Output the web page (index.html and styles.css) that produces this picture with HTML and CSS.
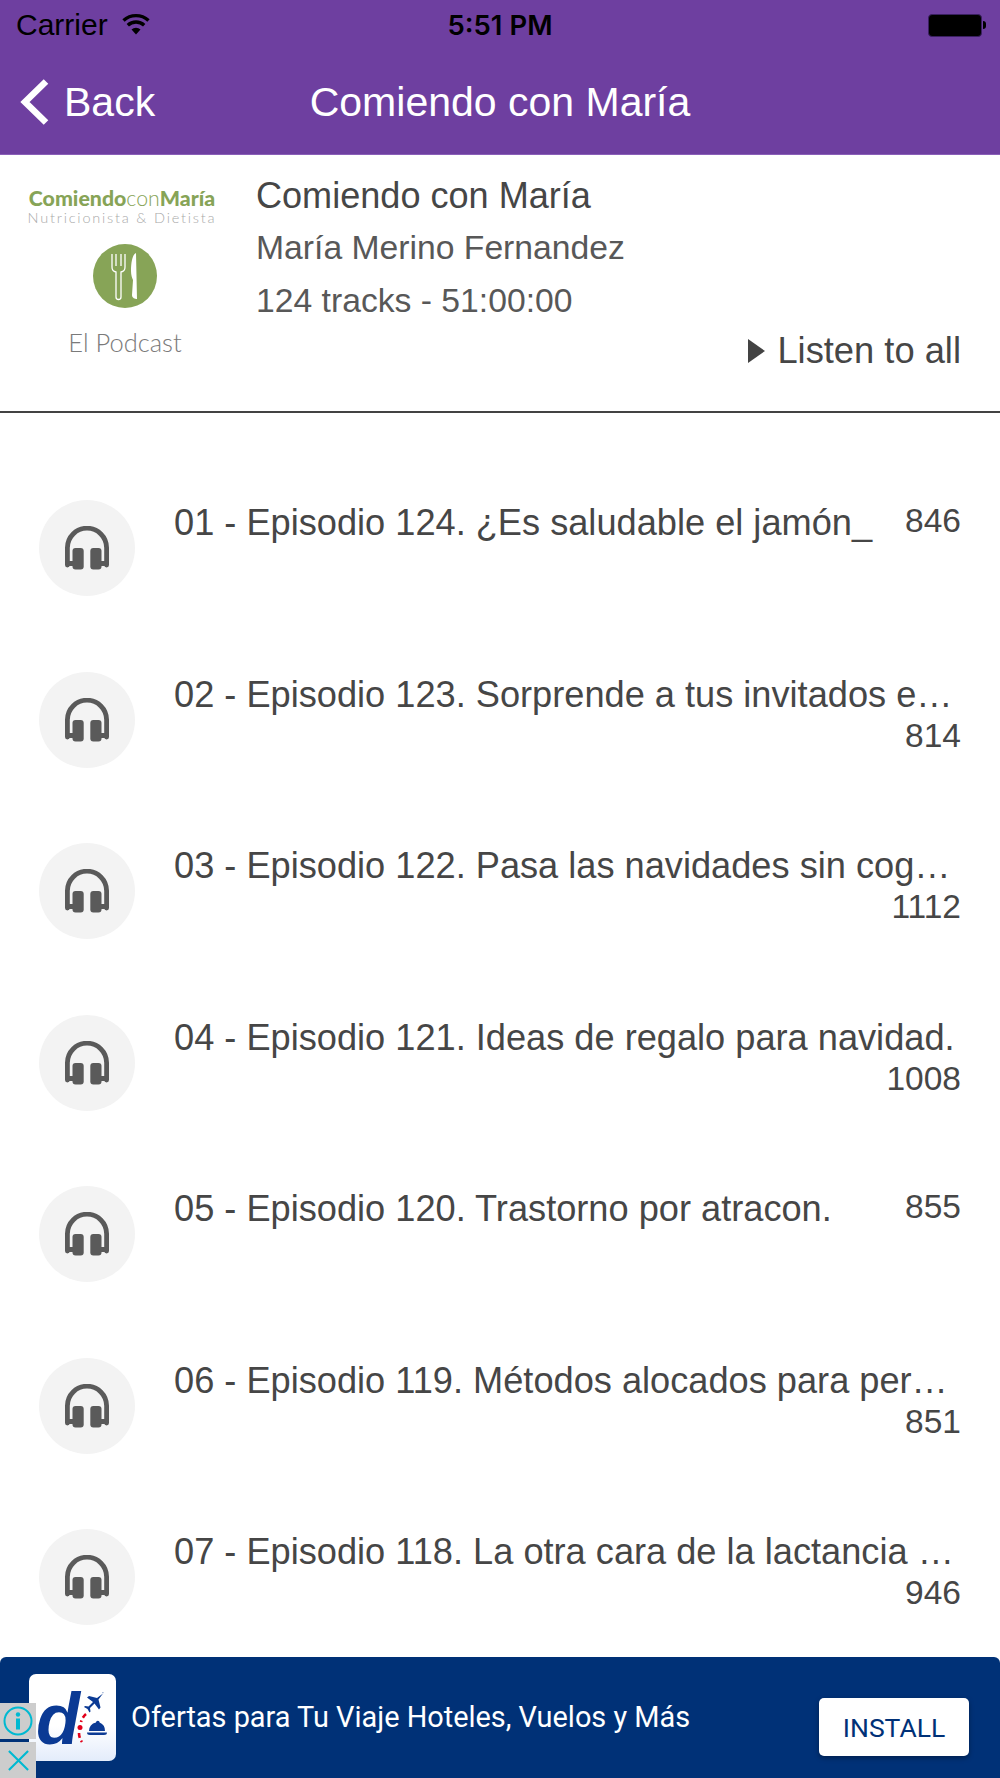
FILE: index.html
```html
<!DOCTYPE html>
<html lang="es">
<head>
<meta charset="utf-8">
<title>Comiendo con María</title>
<link rel="stylesheet" href="styles.css">
</head>
<body>
<svg class="defs" width="0" height="0" aria-hidden="true">
  <symbol id="phones" viewBox="0 0 44 44">
    <path d="M2.400 39V21.800a19.600 19.600 0 0 1 39.200 0V39" fill="none" stroke="#5a5a5a" stroke-width="4.800" stroke-linecap="round"/>
    <rect x="7.500" y="22" width="11.200" height="21.500" rx="3" fill="#5a5a5a"/>
    <rect x="25.300" y="22" width="11.200" height="21.500" rx="3" fill="#5a5a5a"/>
    <path d="M2 35h6v5H4zM42 35h-6v5h4z" fill="#5a5a5a"/>
  </symbol>
</svg>
<div class="app">
  <header class="top">
    <div class="status">
      <div class="status-left">
        <span class="carrier">Carrier</span>
        <svg class="wifi" viewBox="0 0 30 22"><path d="M15 21.500 10.500 16.500a6.500 6.500 0 0 1 9 0z" fill="#000"/><path d="M6.800 12.300a12 12 0 0 1 16.400 0M2.500 7.500a18.500 18.500 0 0 1 25 0" fill="none" stroke="#000" stroke-width="3.400"/></svg>
      </div>
      <span class="clock">5:51 PM</span>
      <div class="battery"><div class="battery-body"></div><div class="battery-tip"></div></div>
    </div>
    <nav class="nav">
      <div class="back">
        <svg class="chevron" viewBox="0 0 30 48"><path d="M26 3.500 5 24l21 20.500" fill="none" stroke="#fff" stroke-width="6.500"/></svg>
        <span>Back</span>
      </div>
      <h1 class="nav-title">Comiendo con María</h1>
    </nav>
  </header>

  <section class="info">
    <div class="logo">
      <div class="logo-brand"><b>Comiendo</b><span class="logo-thin">con</span><b>María</b></div>
      <div class="logo-sub">Nutricionista &amp; Dietista</div>
      <svg class="logo-mark" viewBox="0 0 64 64">
        <circle cx="32" cy="32" r="32" fill="#87a457"/>
        <path d="M19 10v13a5 5 0 0 0 4 5v25a2.500 2.500 0 0 0 5 0V28a5 5 0 0 0 4-5V10M23 10v12M28 10v12" fill="none" stroke="#fff" stroke-width="1.300"/>
        <path d="M43 9c-3 1-5 8-5 18 0 4 1 7 2 9l-1 15c0 3 3 4 5 4z" fill="#fff"/>
      </svg>
      <div class="logo-podcast">El Podcast</div>
    </div>
    <div class="meta">
      <div class="meta-title">Comiendo con María</div>
      <div class="meta-line">María Merino Fernandez</div>
      <div class="meta-line">124 tracks - 51:00:00</div>
      <div class="listen"><span class="tri"></span><span>Listen to all</span></div>
    </div>
  </section>

  <main class="list">
    <div class="row">
      <div class="disc"><svg class="phones"><use href="#phones"/></svg></div>
      <div class="row-body"><span class="row-title">01 - Episodio 124. ¿Es saludable el jamón_</span><span class="count">846</span></div>
    </div>
    <div class="row">
      <div class="disc"><svg class="phones"><use href="#phones"/></svg></div>
      <div class="row-body wrap"><span class="row-title">02 - Episodio 123. Sorprende a tus invitados e…</span><span class="count">814</span></div>
    </div>
    <div class="row">
      <div class="disc"><svg class="phones"><use href="#phones"/></svg></div>
      <div class="row-body wrap"><span class="row-title">03 - Episodio 122. Pasa las navidades sin cog…</span><span class="count">1112</span></div>
    </div>
    <div class="row">
      <div class="disc"><svg class="phones"><use href="#phones"/></svg></div>
      <div class="row-body wrap"><span class="row-title">04 - Episodio 121. Ideas de regalo para navidad.</span><span class="count">1008</span></div>
    </div>
    <div class="row">
      <div class="disc"><svg class="phones"><use href="#phones"/></svg></div>
      <div class="row-body"><span class="row-title">05 - Episodio 120. Trastorno por atracon.</span><span class="count">855</span></div>
    </div>
    <div class="row">
      <div class="disc"><svg class="phones"><use href="#phones"/></svg></div>
      <div class="row-body wrap"><span class="row-title">06 - Episodio 119. Métodos alocados para per…</span><span class="count">851</span></div>
    </div>
    <div class="row">
      <div class="disc"><svg class="phones"><use href="#phones"/></svg></div>
      <div class="row-body wrap"><span class="row-title">07 - Episodio 118. La otra cara de la lactancia …</span><span class="count">946</span></div>
    </div>
  </main>

  <footer class="ad">
    <div class="ad-icon">
      <span class="ad-d">d</span>
      <svg class="ad-art" viewBox="0 0 87 87">
        <path d="M74 19.500 68 24 60 22l-2 1.500 6 4.500-4.500 4.500-3.500-.5-1 1 3.500 2 2 3.500 1-1-.5-3.500 4.500-4.500 4.500 6 1.500-2-2-8 4.500-6q1-2-.5-1.500z" fill="#0b3a94"/>
        <path d="M57 40q-3.500 3-5 8M50 59q0 5 3 9" fill="none" stroke="#e2001a" stroke-width="2.600" stroke-dasharray="5 3"/>
        <circle cx="51" cy="53.500" r="2.500" fill="#e2001a"/>
        <path d="M60 57a9 9 0 0 1 7-8.500 1.800 1.800 0 1 1 3.600 0A9 9 0 0 1 76 57zM58 58.500h20q0 2.500-3 2.500H61q-3 0-3-2.500z" fill="#0b3a94"/>
      </svg>
    </div>
    <div class="ad-text">Ofertas para Tu Viaje Hoteles, Vuelos y Más</div>
    <div class="ad-btn">INSTALL</div>
    <div class="ad-controls">
      <div class="ad-ctl"><svg viewBox="0 0 30 30"><circle cx="15" cy="15" r="13.500" fill="none" stroke="#00b9d1" stroke-width="2"/><circle cx="15" cy="8.500" r="2.200" fill="#00b9d1"/><rect x="13" y="12.500" width="4" height="11" fill="#00b9d1"/></svg></div>
      <div class="ad-ctl ad-close"><svg viewBox="0 0 24 24"><path d="M2 2 22 22M22 2 2 22" fill="none" stroke="#00b9d1" stroke-width="2.200"/></svg></div>
    </div>
  </footer>
</div>
</body>
</html>
```

FILE: styles.css
```css
* { box-sizing: border-box; }
html, body { margin: 0; padding: 0; background: #fff; }
.defs { position: absolute; }
.app {
  width: 1000px;
  height: 1778px;
  display: flex;
  flex-direction: column;
  overflow: hidden;
  font-family: "Liberation Sans", Arial, sans-serif;
  color: #464646;
}

/* header */
.top { background: #6e3fa0; height: 155px; border-bottom: 1px solid #8a5fb8; flex: none; }
.status {
  height: 50px;
  padding: 0 14px 0 16px;
  display: flex;
  align-items: center;
  justify-content: space-between;
  color: #000;
  position: relative;
}
.status-left { display: flex; align-items: center; gap: 13px; }
.carrier { font-size: 30px; }
.wifi { width: 30px; height: 22px; margin-top: -3px; }
.clock {
  position: absolute;
  left: 0;
  right: 0;
  text-align: center;
  font-family: Inter, "Liberation Sans", sans-serif;
  font-weight: 600;
  font-size: 27.500px;
}
.battery { display: flex; align-items: center; }
.battery-body {
  width: 54px;
  height: 23px;
  background: #000;
  border: 1px solid #3a2060;
  border-radius: 4px;
}
.battery-tip { width: 3px; height: 8px; background: #000; border-radius: 0 3px 3px 0; margin-left: 1px; }
.nav {
  height: 104px;
  display: flex;
  align-items: center;
  position: relative;
  color: #fff;
  padding-left: 20px;
}
.back { display: flex; align-items: center; gap: 14px; font-size: 41px; }
.chevron { width: 30px; height: 48px; }
.nav-title {
  position: absolute;
  left: 0;
  right: 0;
  margin: 0;
  text-align: center;
  font-weight: 400;
  font-size: 41px;
}

/* podcast info */
.info {
  flex: none;
  height: 258px;
  border-bottom: 2px solid #434343;
  display: flex;
}
.logo {
  width: 256px;
  flex: none;
  display: flex;
  flex-direction: column;
  align-items: center;
  padding: 31px 6px 0 0;
}
.logo-brand { font-family: Lato, sans-serif; font-size: 21.300px; color: #87a457; line-height: 24px; white-space: nowrap; margin-right: 6px; }
.logo-brand b { font-weight: 900; }
.logo-thin { font-weight: 300; }
.logo-sub {
  font-family: Lato, sans-serif;
  font-weight: 300;
  font-size: 14.500px;
  letter-spacing: 1.800px;
  color: #a9a9a9;
  line-height: 15px;
  white-space: nowrap;
  margin-right: 6px;
}
.logo-mark { width: 64px; height: 64px; margin-top: 19px; }
.logo-podcast {
  font-family: Lato, sans-serif;
  font-weight: 300;
  font-size: 25.500px;
  color: #7a7a7a;
  margin-top: 18px;
  line-height: 32px;
}
.meta { flex: 1; padding: 21px 39px 0 0; display: flex; flex-direction: column; }
.meta-title { font-size: 36.100px; line-height: 40px; margin-bottom: 11px; }
.meta-line { font-size: 33.700px; line-height: 40px; margin-bottom: 13px; color: #585858; }
.listen {
  align-self: flex-end;
  display: flex;
  align-items: center;
  gap: 12px;
  font-size: 36.300px;
  line-height: 40px;
  margin-top: -2px;
}
.tri {
  width: 0;
  height: 0;
  border-style: solid;
  border-width: 12px 0 12px 17px;
  border-color: transparent transparent transparent #434343;
}

/* episode list */
.list { flex: 1; min-height: 0; padding-top: 87px; }
.row { height: 171.500px; display: flex; padding-left: 39px; }
.disc {
  width: 96px;
  height: 96px;
  flex: none;
  border-radius: 50%;
  background: #f3f3f3;
  display: flex;
  align-items: center;
  justify-content: center;
}
.phones { width: 44px; height: 44px; }
.row-body {
  width: 787px;
  margin-left: 39px;
  padding-top: 3px;
  display: flex;
  flex-wrap: wrap;
  justify-content: space-between;
  align-content: flex-start;
}
.row-title { font-size: 36.200px; line-height: 40px; white-space: nowrap; }
.count { font-size: 33.500px; line-height: 36px; margin-left: auto; }
.row-body.wrap .row-title { width: 100%; }
.row-body.wrap .count { margin-top: 3px; }

/* ad */
.ad {
  flex: none;
  height: 121px;
  background: #003177;
  border-radius: 6px 6px 0 0;
  display: flex;
  align-items: center;
  position: relative;
  padding: 0 31px 0 29px;
}
.ad-icon {
  width: 87px;
  height: 87px;
  flex: none;
  border-radius: 7px;
  background: linear-gradient(#fff 60%, #e3ecfb);
  position: relative;
  overflow: hidden;
}
.ad-d {
  position: absolute;
  left: 7px;
  top: 5px;
  font-family: "Liberation Sans", sans-serif;
  font-weight: 700;
  font-style: italic;
  font-size: 72px;
  line-height: 80px;
  color: #0b3a94;
}
.ad-art { position: absolute; left: 0; top: 0; width: 87px; height: 87px; }
.ad-text {
  flex: 1;
  margin-left: 15px;
  margin-top: -1px;
  font-family: Roboto, sans-serif;
  font-size: 28.900px;
  color: #fff;
  white-space: nowrap;
}
.ad-btn {
  width: 150px;
  height: 58px;
  flex: none;
  margin-top: 19px;
  background: #fff;
  border-radius: 5px;
  box-shadow: 0 2px 5px rgba(0, 0, 0, .35);
  color: #003177;
  font-family: Roboto, sans-serif;
  font-size: 26.500px;
  display: flex;
  align-items: center;
  justify-content: center;
}
.ad-controls {
  position: absolute;
  left: 0;
  bottom: 0;
  width: 36px;
  display: flex;
  flex-direction: column;
  gap: 3px;
}
.ad-ctl { height: 36px; background: #cdcdcd; display: flex; align-items: center; justify-content: center; }
.ad-ctl svg { width: 30px; height: 30px; }
.ad-close svg { width: 23px; height: 23px; }
```
